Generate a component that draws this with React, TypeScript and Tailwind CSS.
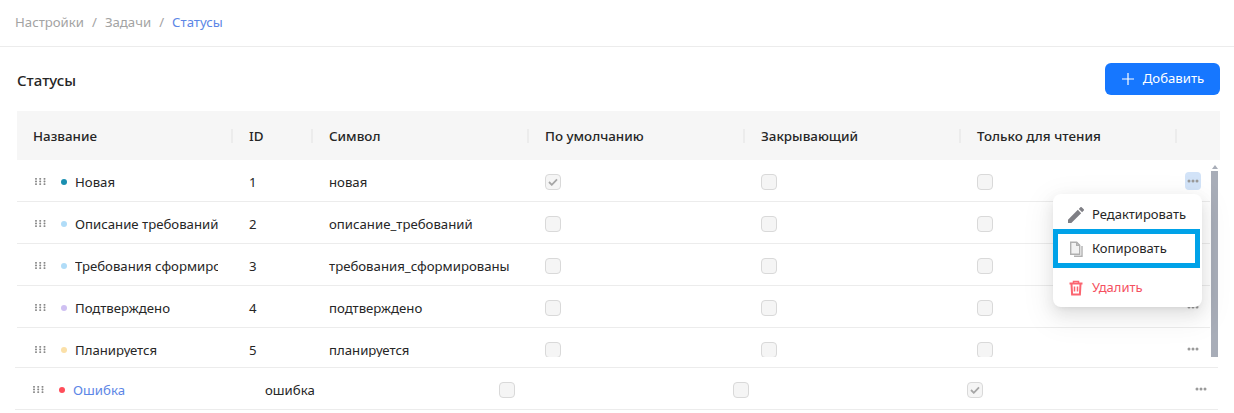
import React from "react";

const rows = [
  { dot: "bg-[#1a8fb0]", name: "Новая", id: "1", sym: "новая", c: [true, false, false] },
  { dot: "bg-[#b0dcf8]", name: "Описание требований", id: "2", sym: "описание_требований", c: [false, false, false] },
  { dot: "bg-[#b0dcf8]", name: "Требования сформированы", id: "3", sym: "требования_сформированы", c: [false, false, false] },
  { dot: "bg-[#cfc0f2]", name: "Подтверждено", id: "4", sym: "подтверждено", c: [false, false, false] },
  { dot: "bg-[#fbe0a8]", name: "Планируется", id: "5", sym: "планируется", c: [false, false, false] },
];

function Grip() {
  return (
    <svg width="11" height="7" viewBox="0 0 11 7" className="shrink-0" fill="#858585">
      {[0, 4.2, 8.5].map((x) =>
        [0, 2.6, 5.2].map((y) => <rect key={x + "-" + y} x={x} y={y} width="2" height="1.8" rx="0.8" />)
      )}
    </svg>
  );
}

function Dots() {
  return (
    <svg width="12" height="4" viewBox="0 0 12 4" fill="#9a9a9a">
      <circle cx="2" cy="2" r="1.5" />
      <circle cx="6" cy="2" r="1.5" />
      <circle cx="10" cy="2" r="1.5" />
    </svg>
  );
}

function Check({ on }: { on: boolean }) {
  return (
    <span className="flex h-4 w-4 items-center justify-center rounded-[4px] border border-[#d9d9d9] bg-[#f5f5f5]">
      {on && (
        <svg width="10" height="8" viewBox="0 0 10 8" fill="none" stroke="#a6a6a6" strokeWidth="1.8">
          <path d="M1 4l2.8 2.8L9 1.4" />
        </svg>
      )}
    </span>
  );
}

const HEAD = ["Название", "ID", "Символ", "По умолчанию", "Закрывающий", "Только для чтения", ""];

export default function App() {
  return (
    <div
      className="h-[413px] w-[1234px] overflow-hidden bg-white text-[13.2px] text-[#262626]"
      style={{ fontFamily: '"Noto Sans", "Open Sans", sans-serif' }}
    >
      <div className="flex h-[47px] items-center gap-[8px] border-b border-[#ececec] pl-[15px] text-[#a3a3a3]">
        <span>Настройки</span>
        <span>/</span>
        <span>Задачи</span>
        <span>/</span>
        <span className="text-[#5c86e6]">Статусы</span>
      </div>

      <div className="flex h-[64px] items-center justify-between pl-[17px] pr-[14px]">
        <h1 className="pt-[2px] text-[15px] font-medium text-[#262626]">Статусы</h1>
        <button className="flex h-8 w-[115px] items-center justify-center gap-[8px] rounded-md bg-[#1677ff] text-white">
          <svg width="14" height="14" viewBox="0 0 14 14" stroke="#fff" strokeWidth="1.2">
            <path d="M7 1v12M1 7h12" />
          </svg>
          Добавить
        </button>
      </div>

      <div className="relative">
        <div className="ml-[17px] mr-[14px] grid h-[49px] grid-cols-[216px_80px_216px_216px_216px_216px_1fr] items-center bg-[#f6f6f6] text-[13.4px] font-medium">
          {HEAD.map((h, i) => (
            <div key={i} className={"h-[14px] pl-4 leading-[14px] " + (i < 6 ? "border-r-2 border-[#ececec]" : "")}>
              {h}
            </div>
          ))}
        </div>

        <div className="ml-[17px] mr-[16px] flex h-[197px] overflow-hidden">
          <div className="flex-1">
            {rows.map((r) => (
              <div
                key={r.id}
                className="grid h-[42px] grid-cols-[216px_80px_216px_216px_216px_216px_1fr] items-center border-b border-[#ececec] pt-[3px]"
              >
                <div className="flex min-w-0 items-center pl-[18px] pr-[15px]">
                  <Grip />
                  <span className={"ml-[15px] mr-2 h-[6px] w-[6px] shrink-0 rounded-full " + r.dot} />
                  <span className="overflow-hidden whitespace-nowrap pt-[2px]">{r.name}</span>
                </div>
                <div className="pl-4 pt-[2px]">{r.id}</div>
                <div className="pl-4 pt-[2px]">{r.sym}</div>
                {r.c.map((c, i) => (
                  <div key={i} className="pl-4">
                    <Check on={c} />
                  </div>
                ))}
                <div className="-mt-[3px] flex justify-end pr-[9px]">
                  <span
                    className={
                      "flex h-[18px] w-[16px] items-center justify-center rounded-[4px] " +
                      (r.id === "1" ? "bg-[#d2e3f8]" : "")
                    }
                  >
                    <Dots />
                  </span>
                </div>
              </div>
            ))}
          </div>
          <div className="ml-px flex w-[7px] flex-col items-center pt-[5px]">
            <div className="mb-[2px] h-0 w-0 border-x-[3px] border-b-[4px] border-x-transparent border-b-[#a8adb8]" />
            <div className="w-full flex-1 bg-[#a8adb8]" />
          </div>
        </div>

        <div className="ml-[15px] mr-[16px] mt-[10px] grid h-[43px] grid-cols-[234px_234px_234px_234px_234px_1fr] items-center border-y border-[#ececec] pt-[3px]">
          <div className="flex items-center pl-[18px]">
            <Grip />
            <span className="ml-[15px] mr-2 h-[6px] w-[6px] shrink-0 rounded-full bg-[#ff4d5a]" />
            <span className="pt-[2px] text-[#5c86e6]">Ошибка</span>
          </div>
          <div className="pl-4 pt-[2px]">ошибка</div>
          <div className="pl-4"><Check on={false} /></div>
          <div className="pl-4"><Check on={false} /></div>
          <div className="pl-4"><Check on={true} /></div>
          <div className="-mt-[3px] flex justify-end pr-[11px]"><Dots /></div>
        </div>

        <div className="absolute left-[1053px] top-[83px] h-[113px] w-[149px] rounded-lg bg-white text-[13px] shadow-[0_6px_16px_rgba(0,0,0,0.09),0_3px_6px_-4px_rgba(0,0,0,0.12),0_9px_28px_8px_rgba(0,0,0,0.05)]">
          <div className="flex h-[39px] items-center gap-[8px] pl-[15px] pt-[3px]">
            <svg width="16" height="16" viewBox="3 3 18 18" fill="#7f7f85">
              <path d="M3 17.25V21h3.75L17.81 9.94l-3.75-3.75L3 17.25zM20.71 7.04a1 1 0 0 0 0-1.41l-2.34-2.34a1 1 0 0 0-1.41 0l-1.83 1.83 3.75 3.75 1.83-1.83z" />
            </svg>
            Редактировать
          </div>
          <div className="-mt-[4px] flex h-[39px] w-[147px] items-center gap-[8px] border-[5px] border-[#00a2e8] pl-[10px]">
            <svg width="16" height="16" viewBox="0 0 16 16" fill="none" stroke="#b0b0b0" strokeWidth="1.4">
              <path d="M2.700 1.200h6l3 3v9h-9z" fill="#f2f2f2" />
              <path d="M8.700 1.200v3h3" />
              <path d="M14 5v10.300H6" />
            </svg>
            Копировать
          </div>
          <div className="flex h-[39px] items-center gap-[8px] pl-[15px] text-[#f5515f]">
            <svg width="16" height="16" viewBox="0 0 16 16" fill="none" stroke="#fb6570" strokeWidth="2">
              <path d="M1.500 3.500h13" />
              <path d="M5.500 3v-1.500h5V3" strokeWidth="1.500" />
              <path d="M3.500 4l.6 10.500h7.800l.6-10.500" />
              <path d="M6.500 6.500v5M9.500 6.500v5" strokeWidth="1.500" />
            </svg>
            Удалить
          </div>
        </div>
      </div>
    </div>
  );
}
